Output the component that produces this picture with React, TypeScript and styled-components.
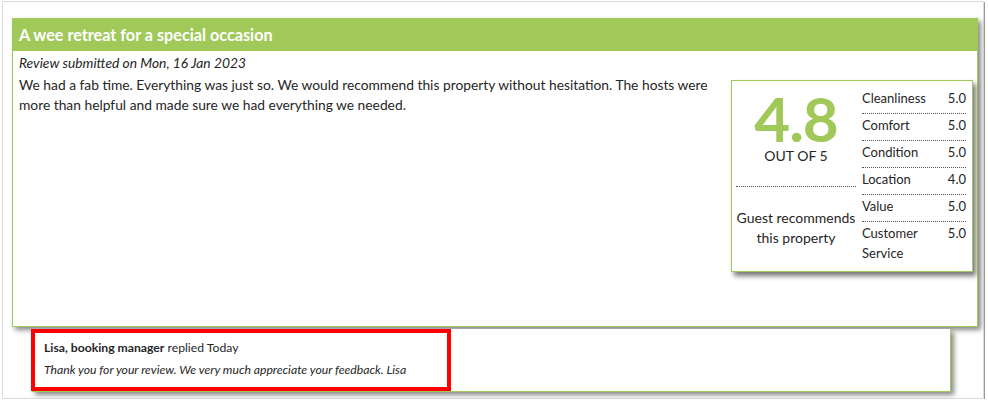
import React from 'react';
import styled, { createGlobalStyle } from 'styled-components';

const GlobalStyle = createGlobalStyle`
  html, body {
    margin: 0;
    padding: 0;
    background: #fff;
  }
  body {
    font-family: Lato, "Liberation Sans", sans-serif;
    color: #262626;
  }
`;

const Frame = styled.div`
  margin: 1px 0 0 2px;
  width: 982px;
  height: 398px;
  border: 1px solid #dcdcdc;
  box-shadow: 1px 1px 0 #999;
  padding: 16px 0 0 9px;
  box-sizing: border-box;
`;

const Card = styled.div`
  width: 966px;
  border: 1px solid #a0c95a;
  box-shadow: 3px 3px 5px #888;
  background: #fff;
  box-sizing: border-box;
`;

const CardHeader = styled.h2`
  margin: 0;
  height: 32px;
  padding: 0 6px;
  background: #a0c95a;
  color: #fff;
  font-size: 16.2px;
  font-weight: 700;
  line-height: 32px;
`;

const CardBody = styled.div`
  display: flex;
  align-items: flex-start;
  height: 275px;
  padding: 0 4px 0 6px;
  box-sizing: border-box;
`;

const TextColumn = styled.div`
  flex: 1;
  font-size: 13.8px;
  line-height: 20px;
  padding-top: 2px;
`;

const Submitted = styled.div`
  font-style: italic;
  margin-bottom: 2px;
`;

const Description = styled.p`
  margin: 0;
  padding-right: 10px;
`;

const RatingBox = styled.div`
  display: flex;
  width: 242px;
  margin-top: 29px;
  border: 1px solid #a0c95a;
  box-shadow: 3px 4px 5px #777;
  box-sizing: border-box;
  padding: 6px 6px 3px 4px;
`;

const ScoreColumn = styled.div`
  width: 120px;
  display: flex;
  flex-direction: column;
  align-items: center;
  text-align: center;
`;

const Score = styled.div`
  color: #a0c95a;
  font-size: 62px;
  font-weight: 700;
  line-height: 62px;
  letter-spacing: -1px;
`;

const OutOf = styled.div`
  font-size: 14px;
  line-height: 14px;
  text-transform: uppercase;
  padding-bottom: 23px;
  width: 100%;
  border-bottom: 1px dotted #555;
`;

const Recommend = styled.div`
  font-size: 14px;
  line-height: 20px;
  margin-top: 21px;
`;

const Categories = styled.div`
  flex: 1;
  margin-left: 6px;
`;

const CategoryRow = styled.div<{ $last?: boolean }>`
  display: flex;
  justify-content: space-between;
  align-items: flex-start;
  font-size: 13px;
  line-height: 20px;
  padding: 1px 0 5px;
  border-bottom: ${p => (p.$last ? 'none' : '1px dotted #555')};
`;

const CategoryName = styled.span`
  width: 64px;
`;

const Reply = styled.div`
  margin-left: 20px;
  width: 919px;
  height: 63px;
  border: 1px solid #a0c95a;
  border-top: none;
  box-shadow: 3px 3px 5px #888;
  background: #fff;
  box-sizing: border-box;
`;

const Highlight = styled.div`
  margin: 2px 0 0 -2px;
  width: 420px;
  height: 62px;
  border: 4px solid #f00;
  box-sizing: border-box;
  padding: 4px 9px 0;
  font-size: 12.2px;
  line-height: 22px;
`;

const ReplyAuthor = styled.strong`
  font-weight: 700;
`;

const ReplyText = styled.div`
  font-style: italic;
`;

const categories = [
  { name: 'Cleanliness', score: '5.0' },
  { name: 'Comfort', score: '5.0' },
  { name: 'Condition', score: '5.0' },
  { name: 'Location', score: '4.0' },
  { name: 'Value', score: '5.0' },
  { name: 'Customer Service', score: '5.0' },
];

export default function App() {
  return (
    <>
      <GlobalStyle />
      <Frame>
        <Card>
          <CardHeader>A wee retreat for a special occasion</CardHeader>
          <CardBody>
            <TextColumn>
              <Submitted>Review submitted on Mon, 16 Jan 2023</Submitted>
              <Description>
                We had a fab time. Everything was just so. We would recommend this property without hesitation. The hosts
                were more than helpful and made sure we had everything we needed.
              </Description>
            </TextColumn>
            <RatingBox>
              <ScoreColumn>
                <Score>4.8</Score>
                <OutOf>Out of 5</OutOf>
                <Recommend>
                  Guest recommends
                  <br />
                  this property
                </Recommend>
              </ScoreColumn>
              <Categories>
                {categories.map((c, i) => (
                  <CategoryRow key={c.name} $last={i === categories.length - 1}>
                    <CategoryName>{c.name}</CategoryName>
                    <span>{c.score}</span>
                  </CategoryRow>
                ))}
              </Categories>
            </RatingBox>
          </CardBody>
        </Card>
        <Reply>
          <Highlight>
            <div>
              <ReplyAuthor>Lisa, booking manager</ReplyAuthor> replied Today
            </div>
            <ReplyText>Thank you for your review. We very much appreciate your feedback. Lisa</ReplyText>
          </Highlight>
        </Reply>
      </Frame>
    </>
  );
}
